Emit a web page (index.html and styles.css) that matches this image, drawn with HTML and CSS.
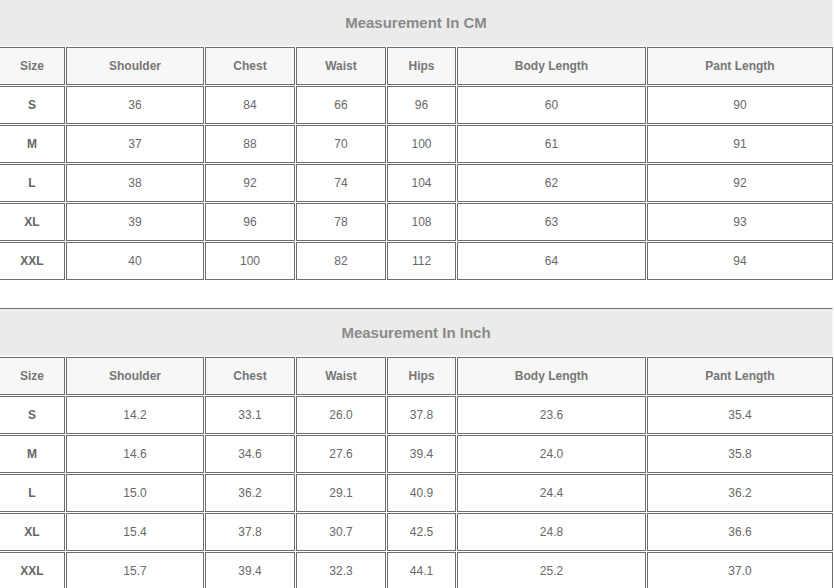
FILE: index.html
```html
<!DOCTYPE html>
<html>
<head>
<meta charset="utf-8">
<link rel="stylesheet" href="styles.css">
</head>
<body>
<div class="chart">
  <div class="sheet">
    <div class="title">Measurement In CM</div>
    <div class="cell head">Size</div><div class="cell head">Shoulder</div><div class="cell head">Chest</div><div class="cell head">Waist</div><div class="cell head">Hips</div><div class="cell head">Body Length</div><div class="cell head">Pant Length</div>
    <div class="cell size">S</div><div class="cell">36</div><div class="cell">84</div><div class="cell">66</div><div class="cell">96</div><div class="cell">60</div><div class="cell">90</div>
    <div class="cell size">M</div><div class="cell">37</div><div class="cell">88</div><div class="cell">70</div><div class="cell">100</div><div class="cell">61</div><div class="cell">91</div>
    <div class="cell size">L</div><div class="cell">38</div><div class="cell">92</div><div class="cell">74</div><div class="cell">104</div><div class="cell">62</div><div class="cell">92</div>
    <div class="cell size">XL</div><div class="cell">39</div><div class="cell">96</div><div class="cell">78</div><div class="cell">108</div><div class="cell">63</div><div class="cell">93</div>
    <div class="cell size">XXL</div><div class="cell">40</div><div class="cell">100</div><div class="cell">82</div><div class="cell">112</div><div class="cell">64</div><div class="cell">94</div>
  </div>
  <div class="sheet">
    <div class="title">Measurement In Inch</div>
    <div class="cell head">Size</div><div class="cell head">Shoulder</div><div class="cell head">Chest</div><div class="cell head">Waist</div><div class="cell head">Hips</div><div class="cell head">Body Length</div><div class="cell head">Pant Length</div>
    <div class="cell size">S</div><div class="cell">14.2</div><div class="cell">33.1</div><div class="cell">26.0</div><div class="cell">37.8</div><div class="cell">23.6</div><div class="cell">35.4</div>
    <div class="cell size">M</div><div class="cell">14.6</div><div class="cell">34.6</div><div class="cell">27.6</div><div class="cell">39.4</div><div class="cell">24.0</div><div class="cell">35.8</div>
    <div class="cell size">L</div><div class="cell">15.0</div><div class="cell">36.2</div><div class="cell">29.1</div><div class="cell">40.9</div><div class="cell">24.4</div><div class="cell">36.2</div>
    <div class="cell size">XL</div><div class="cell">15.4</div><div class="cell">37.8</div><div class="cell">30.7</div><div class="cell">42.5</div><div class="cell">24.8</div><div class="cell">36.6</div>
    <div class="cell size">XXL</div><div class="cell">15.7</div><div class="cell">39.4</div><div class="cell">32.3</div><div class="cell">44.1</div><div class="cell">25.2</div><div class="cell">37.0</div>
  </div>
</div>
</body>
</html>
```
FILE: styles.css
```css
html, body {
  margin: 0;
  padding: 0;
  background: #ffffff;
  overflow: hidden;
}

body {
  width: 834px;
  height: 588px;
  font-family: "Liberation Sans", Arial, sans-serif;
}

.chart {
  margin-left: -2px;
  margin-top: -3px;
  width: 836px;
  display: flex;
  flex-direction: column;
  gap: 26px;
}

.sheet {
  display: grid;
  grid-template-columns: 66px 138px 90px 90px 69px 189px 186px;
  grid-template-rows: 48px;
  grid-auto-rows: 38px;
  gap: 1px;
  padding: 1px;
  background: #ffffff;
}

.title {
  grid-column: 1 / -1;
  box-sizing: border-box;
  background: #ebebeb;
  border: 1px solid #f3f3f3;
  border-top-color: #6c6c6c;
  display: flex;
  align-items: center;
  justify-content: center;
  font-size: 15px;
  font-weight: bold;
  color: #8a8a8a;
}

.cell {
  box-sizing: border-box;
  border: 1px solid #6e6e6e;
  background: #ffffff;
  display: flex;
  align-items: center;
  justify-content: center;
  font-size: 12px;
  color: #686868;
}

.head {
  background: #f7f7f7;
  font-weight: bold;
  color: #767676;
}

.size {
  font-weight: bold;
  color: #666666;
}
```
